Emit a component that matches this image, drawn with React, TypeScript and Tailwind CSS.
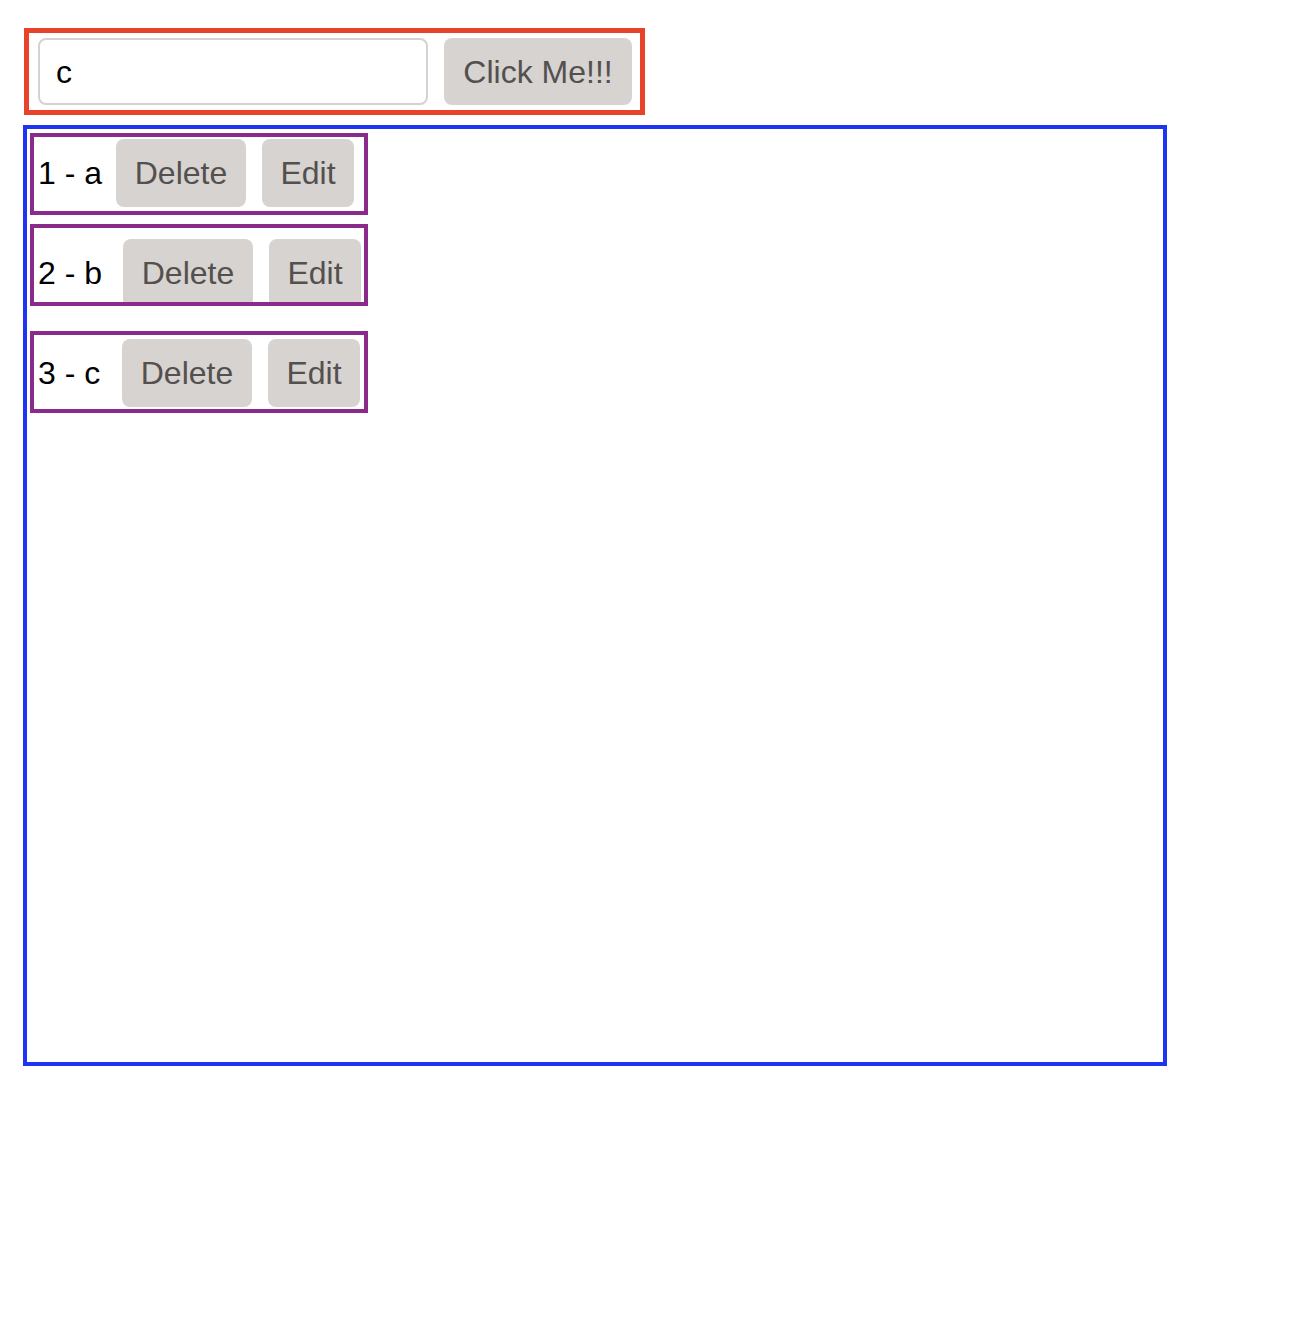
import React from "react";

const rows = [
  { label: "1 - a", w: "w-[62px]", pt: "pt-[2px]", mt: "mt-[4px]" },
  { label: "2 - b", w: "w-[69px]", pt: "pt-[11px]", mt: "mt-[9px]" },
  { label: "3 - c", w: "w-[68px]", pt: "pt-[4px]", mt: "mt-[25px]" },
];

export default function App() {
  return (
    <div
      className="min-h-[1322px] w-[1306px] bg-white pt-[28px]"
      style={{ fontFamily: '"Liberation Sans", Arial, sans-serif' }}
    >
      <div className="ml-[24px] flex h-[87px] w-[621px] items-center gap-[16px] border-[5px] border-[#e8432a] pl-[9px]">
        <input
          readOnly
          value="c"
          className="h-[67px] w-[390px] rounded-[8px] border-2 border-[#d6d2cf] bg-white pl-[16px] pt-[2px] text-[32px] text-black outline-none"
          style={{ fontFamily: '"Liberation Sans", Arial, sans-serif' }}
        />
        <button className="flex h-[67px] w-[188px] items-center justify-center rounded-[8px] bg-[#d7d3d0] text-[32px] text-[#53504e]">
          Click Me!!!
        </button>
      </div>

      <div className="ml-[23px] mt-[10px] h-[941px] w-[1144px] border-4 border-[#1d35f3]">
        {rows.map((r) => (
          <div
            key={r.label}
            className={`ml-[3px] h-[82px] w-[338px] overflow-hidden border-4 border-[#8a2b8c] pl-[4px] ${r.pt} ${r.mt}`}
          >
            <div className="flex items-start gap-[16px]">
              <span
                className={`flex h-[68px] shrink-0 items-center whitespace-nowrap text-[32px] text-black ${r.w}`}
              >
                {r.label}
              </span>
              <button className="flex h-[68px] w-[130px] shrink-0 items-center justify-center rounded-[8px] bg-[#d7d3d0] text-[32px] text-[#53504e]">
                Delete
              </button>
              <button className="flex h-[68px] w-[92px] shrink-0 items-center justify-center rounded-[8px] bg-[#d7d3d0] text-[32px] text-[#53504e]">
                Edit
              </button>
            </div>
          </div>
        ))}
      </div>
    </div>
  );
}
